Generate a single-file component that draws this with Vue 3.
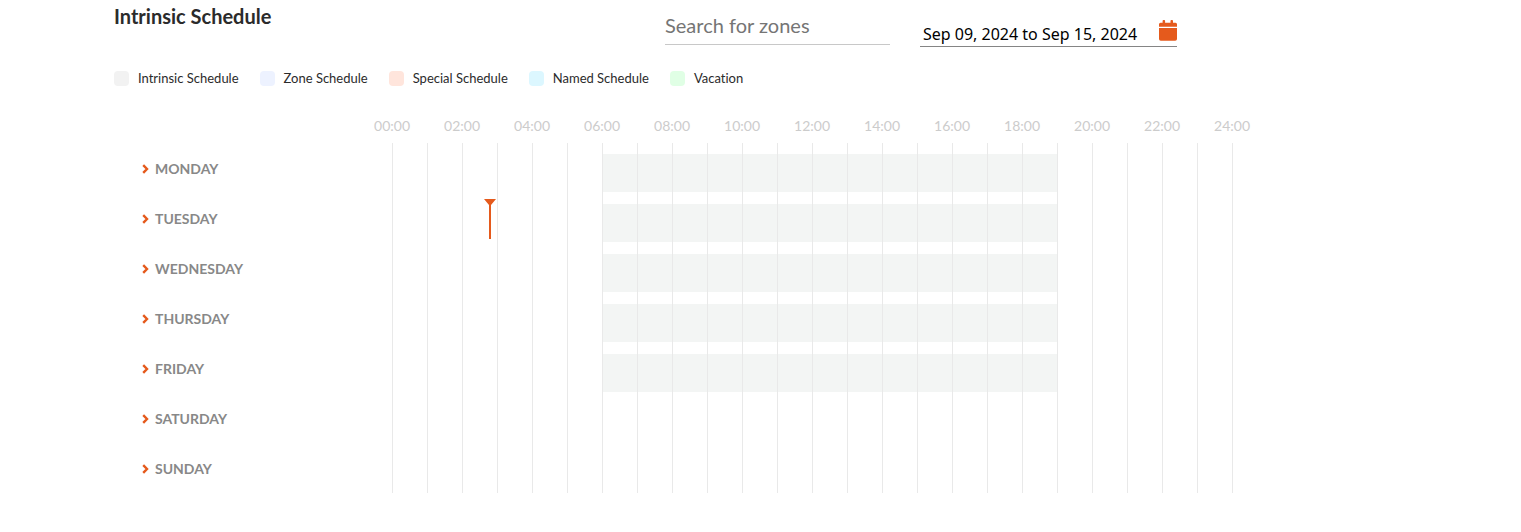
<script setup>
import { ref } from 'vue'

const search = ref('')
const range = ref('Sep 09, 2024 to Sep 15, 2024')

const legend = [
  { label: 'Intrinsic Schedule', kind: 'intrinsic' },
  { label: 'Zone Schedule', kind: 'zone' },
  { label: 'Special Schedule', kind: 'special' },
  { label: 'Named Schedule', kind: 'named' },
  { label: 'Vacation', kind: 'vacation' }
]

const hours = Array.from({ length: 13 }, (_, i) => String(i * 2).padStart(2, '0') + ':00')

const days = [
  { name: 'MONDAY', from: 6, to: 19 },
  { name: 'TUESDAY', from: 6, to: 19, now: 2.8 },
  { name: 'WEDNESDAY', from: 6, to: 19 },
  { name: 'THURSDAY', from: 6, to: 19 },
  { name: 'FRIDAY', from: 6, to: 19 },
  { name: 'SATURDAY' },
  { name: 'SUNDAY' }
]
</script>

<template>
  <main class="page">
    <header class="top">
      <h1 class="title">Intrinsic Schedule</h1>
      <input v-model="search" class="search" type="text" placeholder="Search for zones" aria-label="Search for zones" />
      <div class="dates">
        <input v-model="range" class="range" type="text" aria-label="Date range" />
        <button class="calendar" type="button" aria-label="Open calendar">
          <svg width="18" height="21" viewBox="0 0 18 21" aria-hidden="true">
            <path d="M0 6.8V4.3q0-1.5 1.5-1.5h2.1V1q0-.9.9-.9h.7q.9 0 .9.9v1.8h5.4V1q0-.9.9-.9h.7q.9 0 .9.9v1.8h2.5q1.5 0 1.5 1.5v2.5zM0 8h18v11q0 1.8-1.8 1.8H1.8Q0 20.8 0 19z" />
          </svg>
        </button>
      </div>
    </header>

    <ul class="legend">
      <li v-for="item in legend" :key="item.kind" class="legend-item">
        <span class="swatch" :class="item.kind"></span>{{ item.label }}
      </li>
    </ul>

    <section class="chart">
      <div class="hours">
        <span v-for="hour in hours" :key="hour" class="hour">{{ hour }}</span>
      </div>
      <div v-for="day in days" :key="day.name" class="row">
        <button class="day" type="button">
          <svg class="chevron" width="7" height="10" viewBox="0 0 7 10" aria-hidden="true">
            <path d="M1.2 1.2L5 5 1.2 8.8" />
          </svg>
          {{ day.name }}
        </button>
        <div class="lane">
          <span v-for="n in 24" :key="n" class="cell" :class="{ busy: n > day.from && n <= day.to }"></span>
          <span v-if="day.now" class="now" :style="{ left: (day.now / 24) * 100 + '%' }"></span>
        </div>
      </div>
    </section>
  </main>
</template>

<style>
body {
  margin: 0;
  background: #fff;
}
</style>

<style scoped>
.page {
  padding: 0 288px 39px 114px;
  font-family: Lato, 'Liberation Sans', sans-serif;
  color: #2b2b2b;
}

.top {
  display: flex;
  align-items: flex-start;
  gap: 30px;
  height: 47px;
  padding-right: 56px;
}

.title {
  flex: 1;
  margin: 4px 0 0;
  font-size: 20px;
  line-height: 24px;
  font-weight: 700;
}

.search,
.range {
  box-sizing: border-box;
  margin: 0;
  padding: 0;
  border: 0;
  outline: 0;
  background: transparent;
}

.search {
  width: 225px;
  height: 37px;
  margin-top: 8px;
  padding-bottom: 2px;
  border-bottom: 1px solid #c8c8c8;
  font: 20px/34px Lato, 'Liberation Sans', sans-serif;
  color: #2b2b2b;
}

.search::placeholder {
  color: #757575;
  opacity: 1;
}

.dates {
  display: flex;
  align-items: flex-start;
  box-sizing: border-box;
  width: 257px;
  height: 27px;
  margin-top: 20px;
  border-bottom: 1px solid #858585;
}

.range {
  flex: 1;
  min-width: 0;
  height: 26px;
  padding: 2px 0 0 3px;
  font: 16px/24px 'Noto Sans', 'DejaVu Sans', sans-serif;
  color: #000;
}

.calendar {
  display: flex;
  padding: 0;
  border: 0;
  background: transparent;
  cursor: pointer;
}

.calendar path {
  fill: #e55a1c;
}

.legend {
  display: flex;
  gap: 21px;
  margin: 22px 0 0;
  padding: 0;
  list-style: none;
  font-size: 13px;
  line-height: 18px;
  font-variant-ligatures: none;
  white-space: nowrap;
}

.legend-item {
  display: flex;
  align-items: center;
  gap: 9px;
}

.swatch {
  width: 15px;
  height: 15px;
  border-radius: 4px;
}

.intrinsic { background: #f2f2f2; }
.zone { background: #edf2ff; }
.special { background: #ffe5dc; }
.named { background: #dcf7ff; }
.vacation { background: #e0ffe5; }

.chart {
  margin-top: 30px;
}

.hours {
  display: flex;
  justify-content: space-between;
  height: 26px;
  margin-left: 278px;
  padding-right: 1px;
  font-size: 14px;
  line-height: 18px;
  color: #ccc;
}

.hour {
  display: flex;
  justify-content: center;
  width: 0;
}

.row {
  display: flex;
  height: 50px;
}

.day {
  display: flex;
  align-items: center;
  gap: 6px;
  flex: 0 0 278px;
  padding: 2px 0 0 28px;
  border: 0;
  background: transparent;
  font: 700 14px/20px Lato, 'Liberation Sans', sans-serif;
  color: #888;
  cursor: pointer;
}

.chevron path {
  fill: none;
  stroke: #e55a1c;
  stroke-width: 2.4;
}

.lane {
  position: relative;
  display: grid;
  grid-template-columns: repeat(24, 1fr);
  flex: 1;
  border-right: 1px solid #e9e9e9;
}

.cell {
  border-left: 1px solid #e9e9e9;
}

.cell.busy::before {
  content: '';
  display: block;
  height: 38px;
  margin-top: 11px;
  background: #f3f5f4;
}

.now {
  position: absolute;
  top: 6px;
  width: 12px;
  height: 40px;
  margin-left: -6px;
  background: #e55a1c;
  clip-path: polygon(0 0, 100% 0, 7px 6px, 7px 100%, 5px 100%, 5px 6px);
}
</style>
